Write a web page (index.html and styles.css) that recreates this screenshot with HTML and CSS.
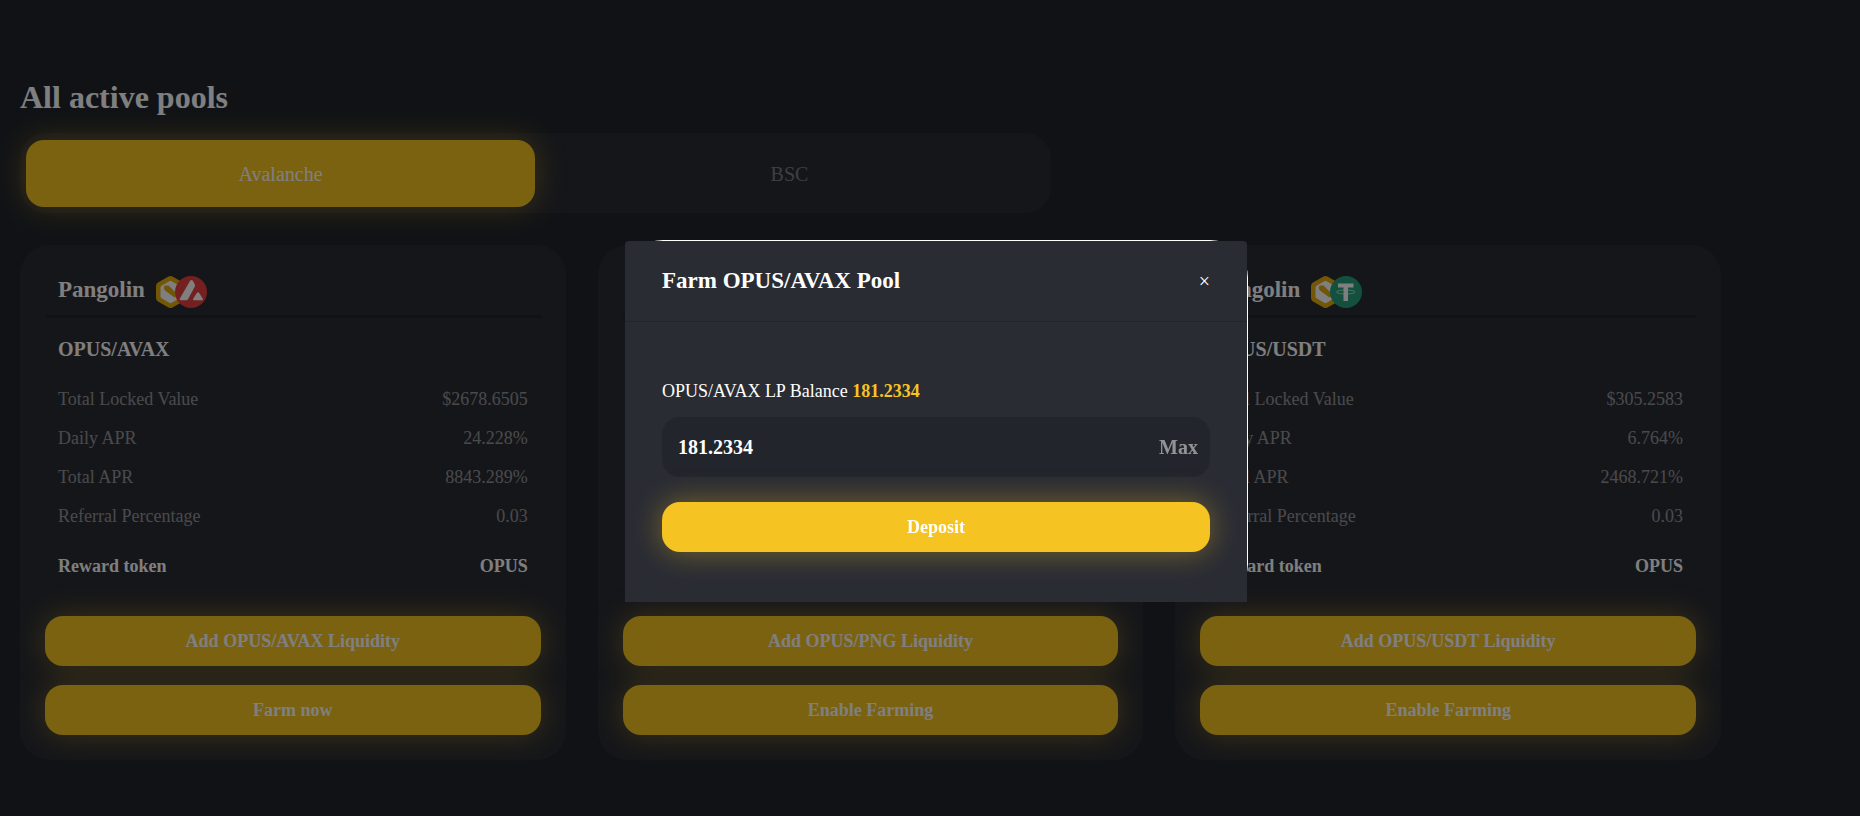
FILE: index.html
```html
<!DOCTYPE html>
<html lang="en">
<head>
<meta charset="utf-8">
<meta name="viewport" content="width=device-width, initial-scale=1">
<title>All active pools</title>
<link rel="stylesheet" href="styles.css">
</head>
<body>
<svg class="sprite" aria-hidden="true">
  <symbol id="opus" viewBox="0 0 30 32">
    <path d="M12.500.6q2-1.200 4 0l10.500 6q2 1.200 2 3.400v12q0 2.200-2 3.400l-10.500 6q-2 1.200-4 0l-10.500-6q-2-1.200-2-3.400v-12q0-2.200 2-3.400z" fill="#e6ac0c"/>
    <path d="M13.300 5.200q1.200-.7 2.400 0l7.800 4.500q1 .6 1 1.800v9q0 1.200-1 1.800l-7.800 4.500q-1.200.7-2.400 0l-7.800-4.500q-1-.6-1-1.800v-9q0-1.200 1-1.800z" fill="#fff"/>
    <path d="M8 11q0-1.500 1.500-1.500h3l5.500 5.500 3 2.500v2.500l-2.500 1.500L9 14.500q-1-.8-1-2z" fill="#e0a80e"/>
  </symbol>
  <symbol id="avax" viewBox="0 0 32 32">
    <circle cx="16" cy="16" r="16" fill="#e84142"/>
    <path d="M15 5q1.500-2 3 0l1.700 3.200q.6 1.300 0 2.600L13 23.200q-.7 1-2 1H6q-2 0-1-1.900z" fill="#fff"/>
    <path d="M21.800 17q1.200-1.700 2.400 0l3.600 5.700q.7 1.500-1 1.500h-7.600q-1.700 0-1-1.500z" fill="#fff"/>
  </symbol>
  <symbol id="usdt" viewBox="0 0 32 32">
    <circle cx="16" cy="16" r="16" fill="#26a17b"/>
    <path d="M8 7.500h15.500v4H18V25h-4.500V11.500H8z" fill="#fff"/>
    <ellipse cx="15.800" cy="16" rx="9.300" ry="2" fill="none" stroke="#fff" stroke-opacity=".6"/>
  </symbol>
</svg>

<main class="page">
  <h1 class="page-title">All active pools</h1>
  <div class="tabs" role="tablist">
    <button class="tab tab-active" type="button" role="tab" aria-selected="true">Avalanche</button>
    <button class="tab" type="button" role="tab" aria-selected="false">BSC</button>
  </div>

  <div class="pools">
    <article class="card">
      <header class="card-head">
        <h2 class="card-title">Pangolin</h2>
        <span class="tokens"><svg class="token-base"><use href="#opus"/></svg><svg class="token-pair"><use href="#avax"/></svg></span>
      </header>
      <div class="card-info">
        <h3 class="pair">OPUS/AVAX</h3>
        <dl class="stats">
          <div class="row"><dt>Total Locked Value</dt><dd>$2678.6505</dd></div>
          <div class="row"><dt>Daily APR</dt><dd>24.228%</dd></div>
          <div class="row"><dt>Total APR</dt><dd>8843.289%</dd></div>
          <div class="row"><dt>Referral Percentage</dt><dd>0.03</dd></div>
          <div class="row reward"><dt>Reward token</dt><dd>OPUS</dd></div>
        </dl>
      </div>
      <div class="actions">
        <button class="btn" type="button">Add OPUS/AVAX Liquidity</button>
        <button class="btn" type="button">Farm now</button>
      </div>
    </article>

    <article class="card">
      <header class="card-head"></header>
      <div class="actions">
        <button class="btn" type="button">Add OPUS/PNG Liquidity</button>
        <button class="btn" type="button">Enable Farming</button>
      </div>
    </article>

    <article class="card">
      <header class="card-head">
        <h2 class="card-title">Pangolin</h2>
        <span class="tokens"><svg class="token-base"><use href="#opus"/></svg><svg class="token-pair"><use href="#usdt"/></svg></span>
      </header>
      <div class="card-info">
        <h3 class="pair">OPUS/USDT</h3>
        <dl class="stats">
          <div class="row"><dt>Total Locked Value</dt><dd>$305.2583</dd></div>
          <div class="row"><dt>Daily APR</dt><dd>6.764%</dd></div>
          <div class="row"><dt>Total APR</dt><dd>2468.721%</dd></div>
          <div class="row"><dt>Referral Percentage</dt><dd>0.03</dd></div>
          <div class="row reward"><dt>Reward token</dt><dd>OPUS</dd></div>
        </dl>
      </div>
      <div class="actions">
        <button class="btn" type="button">Add OPUS/USDT Liquidity</button>
        <button class="btn" type="button">Enable Farming</button>
      </div>
    </article>
  </div>
</main>

<div class="overlay">
  <div class="modal" role="dialog" aria-modal="true" aria-labelledby="modal-title">
    <div class="modal-inner">
      <header class="modal-head">
        <h2 class="card-title" id="modal-title">Farm OPUS/AVAX Pool</h2>
        <button class="close" type="button" aria-label="Close">×</button>
      </header>
      <form class="modal-body">
        <label class="balance" for="amount">OPUS/AVAX LP Balance <strong>181.2334</strong></label>
        <div class="field">
          <input class="amount" id="amount" type="text" value="181.2334">
          <button class="max" type="button">Max</button>
        </div>
        <button class="btn" type="button">Deposit</button>
      </form>
    </div>
  </div>
</div>
</body>
</html>
```
FILE: styles.css
```css
:root {
  --bg: #22252c;
  --panel: #2a2c34;
  --accent: #f6c422;
  --glow: 0 0 30px rgba(246, 196, 34, 0.4);
}

* {
  box-sizing: border-box;
}

body {
  margin: 0;
  background: var(--bg);
  color: #fff;
  font-family: "Liberation Serif", "Times New Roman", serif;
  font-size: 18px;
  line-height: 20px;
}

h1,
h2,
h3,
dl,
dd {
  margin: 0;
}

button,
input {
  border: 0;
  padding: 0;
  background: none;
  color: inherit;
  font: inherit;
}

button {
  cursor: pointer;
}

.sprite {
  display: none;
}

.page {
  padding: 79px 139px 56px 20px;
}

.page-title {
  font-size: 32px;
  line-height: 36px;
}

.tabs {
  display: grid;
  grid-template-columns: 1fr 1fr;
  width: 61%;
  max-width: 1031px;
  margin-top: 18px;
  padding: 7px 7px 6px 6px;
  border-radius: 26px;
  background: var(--panel);
}

.tab {
  height: 67px;
  border-radius: 18px;
  color: rgba(255, 255, 255, 0.4);
  font-size: 20px;
}

.tab-active {
  background: var(--accent);
  box-shadow: var(--glow);
  color: #fff;
}

.pools {
  display: grid;
  grid-template-columns: repeat(3, 1fr);
  gap: 32px;
  margin-top: 32px;
}

.card {
  display: flex;
  flex-direction: column;
  padding: 31px 25px 25px;
  border-radius: 30px;
  background: var(--panel);
}

.card-head {
  display: flex;
  align-items: flex-start;
  gap: 11px;
  min-height: 42px;
  padding: 0 13px 7px;
  border-bottom: 3px solid var(--bg);
}

.card-title {
  font-size: 23px;
  line-height: 28px;
}

.tokens {
  display: flex;
}

.token-base {
  width: 30px;
  height: 32px;
}

.token-pair {
  width: 32px;
  height: 32px;
  margin-left: -11px;
}

.card-info {
  padding: 20px 13px 40px;
}

.pair {
  font-size: 20px;
  line-height: 22px;
}

.stats {
  display: grid;
  gap: 19px;
  margin-top: 29px;
}

.row {
  display: flex;
  justify-content: space-between;
  color: rgba(255, 255, 255, 0.5);
}

.reward {
  margin-top: 11px;
  color: #fff;
  font-weight: bold;
}

.actions {
  display: grid;
  gap: 19px;
  margin-top: auto;
}

.btn {
  width: 100%;
  height: 50px;
  border-radius: 18px;
  background: var(--accent);
  box-shadow: var(--glow);
  color: #fff;
  font-weight: bold;
}

.overlay {
  position: fixed;
  inset: 0;
  display: flex;
  justify-content: center;
  align-items: flex-start;
  padding: 240px 0 0 13px;
  background: rgba(0, 0, 0, 0.5);
}

.modal {
  width: 100%;
  max-width: 623px;
  padding: 1px 1px 0 0;
  border-radius: 38px;
  background: #fff;
}

.modal-inner {
  border-radius: 4px 4px 0 0;
  background: var(--panel);
}

.modal-head {
  display: flex;
  align-items: center;
  justify-content: space-between;
  height: 81px;
  padding: 0 37px;
  border-bottom: 1px solid var(--bg);
}

.close {
  font-size: 20px;
}

.modal-body {
  padding: 59px 37px 50px;
}

.balance {
  display: block;
}

.balance strong {
  color: var(--accent);
}

.field {
  display: flex;
  align-items: center;
  height: 60px;
  margin: 16px 0 25px;
  padding: 0 12px 0 16px;
  border-radius: 18px;
  background: var(--bg);
  font-size: 20px;
  font-weight: bold;
}

.amount {
  flex: 1;
  min-width: 0;
  outline: 0;
}

.max {
  color: rgba(255, 255, 255, 0.5);
}
```
